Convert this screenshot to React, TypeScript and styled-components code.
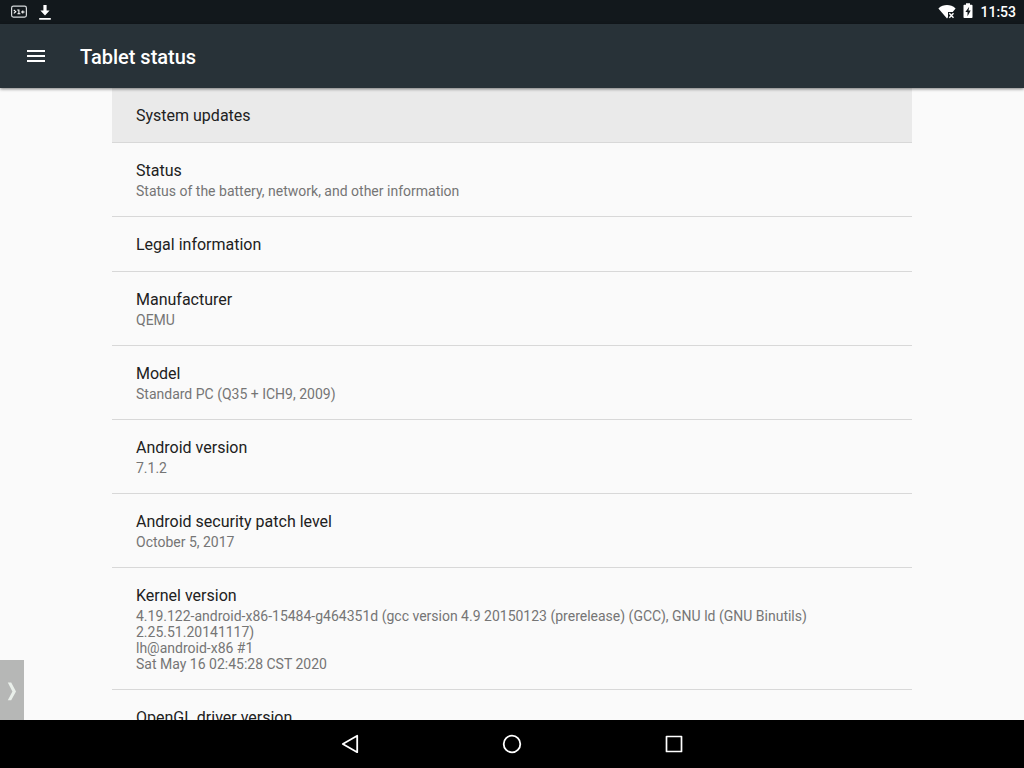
import React from 'react';
import styled, { createGlobalStyle } from 'styled-components';

const GlobalStyle = createGlobalStyle`
  * { box-sizing: border-box; }
  body {
    margin: 0;
    background: #fafafa;
    font-family: Roboto, "Liberation Sans", sans-serif;
  }
  button { border: 0; padding: 0; background: none; color: inherit; font: inherit; cursor: pointer; }
  svg { display: block; }
`;

const Screen = styled.div`
  display: flex;
  flex-direction: column;
  height: 100vh;
  overflow: hidden;
`;

const StatusBar = styled.div`
  flex: none;
  display: flex;
  justify-content: space-between;
  align-items: center;
  height: 24px;
  padding: 0 8px 0 10px;
  background: #12181c;
  color: #fff;
`;

const StatusGroup = styled.div<{ $gap: number }>`
  display: flex;
  align-items: center;
  gap: ${(p) => p.$gap}px;
`;

const Clock = styled.time`
  font-size: 14px;
  font-weight: 500;
  line-height: 24px;
`;

const AppBar = styled.header`
  flex: none;
  display: flex;
  align-items: center;
  gap: 32px;
  height: 64px;
  padding: 0 24px;
  background: #283238;
  color: #fff;
  box-shadow: 0 1px 3px rgba(0, 0, 0, 0.5);
  z-index: 1;
`;

const MenuButton = styled.button`
  width: 24px;
  height: 24px;
`;

const Title = styled.h1`
  margin: 0;
  padding-top: 2px;
  font-size: 20px;
  font-weight: 500;
  line-height: 24px;
`;

const Content = styled.main`
  position: relative;
  flex: 1;
  min-height: 0;
  overflow: hidden;
`;

const List = styled.ul`
  list-style: none;
  max-width: 800px;
  margin: 0 auto;
  padding: 0;
`;

const Row = styled.li<{ $active?: boolean }>`
  border-bottom: 1px solid #d8d8d8;
  background: ${(p) => (p.$active ? '#eaeaea' : 'transparent')};
`;

const RowButton = styled.button`
  display: flex;
  flex-direction: column;
  width: 100%;
  padding: 16px 24px 14px;
  text-align: left;
`;

const RowTitle = styled.span`
  font-size: 16px;
  line-height: 24px;
  color: #212121;
`;

const RowSummary = styled.span`
  max-width: 700px;
  padding-bottom: 3px;
  font-size: 14px;
  line-height: 16px;
  color: #757575;
  white-space: pre-line;
`;

const EdgeHandle = styled.button`
  position: absolute;
  left: 0;
  bottom: 0;
  display: flex;
  align-items: center;
  justify-content: flex-end;
  width: 24px;
  height: 60px;
  padding: 2px 7px 0 0;
  background: #b6b7b6;
`;

const NavBar = styled.nav`
  flex: none;
  display: flex;
  justify-content: center;
  height: 48px;
  background: #000;
`;

const NavButton = styled.button`
  display: flex;
  align-items: center;
  justify-content: center;
  width: 162px;
`;

const items: { title: string; summary?: string; active?: boolean }[] = [
  { title: 'System updates', active: true },
  { title: 'Status', summary: 'Status of the battery, network, and other information' },
  { title: 'Legal information' },
  { title: 'Manufacturer', summary: 'QEMU' },
  { title: 'Model', summary: 'Standard PC (Q35 + ICH9, 2009)' },
  { title: 'Android version', summary: '7.1.2' },
  { title: 'Android security patch level', summary: 'October 5, 2017' },
  {
    title: 'Kernel version',
    summary:
      '4.19.122-android-x86-15484-g464351d (gcc version 4.9 20150123 (prerelease) (GCC), GNU ld (GNU Binutils) 2.25.51.20141117)\nlh@android-x86 #1\nSat May 16 02:45:28 CST 2020',
  },
  { title: 'OpenGL driver version' },
];

const TerminalIcon = () => (
  <svg width="18" height="24" viewBox="0 0 18 24" fill="none" stroke="#fff" aria-hidden="true">
    <rect x="1.6" y="6.1" width="14.8" height="11" rx="1.8" stroke="#d5d9db" strokeWidth="1.2" />
    <path d="M3.8 10l2 1.7-2 1.7M7.2 10h1.7v3.6M7.4 13.7h3M11 12h3.6M12.8 10.4v3.2" strokeWidth="1.1" />
  </svg>
);

const DownloadIcon = () => (
  <svg width="14" height="24" viewBox="0 0 14 24" fill="#fff" aria-hidden="true">
    <path d="M5.4 5h3.2v5.6h3L7 15.6l-4.6-5h3zM1.2 18h11.6v1.7H1.2z" />
  </svg>
);

const WifiIcon = () => (
  <svg width="18" height="24" viewBox="0 0 18 24" aria-hidden="true">
    <path d="M.4 8.4C3 6.200 6 5.1 9 5.1s6 1.1 8.6 3.3l-2.9 3.500H10v5.4l-1 1.1z" fill="#fff" />
    <path d="M11.3 13.3l4.2 4.4M15.5 13.3l-4.2 4.4" stroke="#fff" strokeWidth="1.4" />
  </svg>
);

const BatteryIcon = () => (
  <svg width="10" height="24" viewBox="0 0 10 24" aria-hidden="true">
    <path d="M3 3.3h4v1.4h1.7q.8 0 .8.8v11.7q0 .8-.8.8H1.3q-.8 0-.8-.8V5.5q0-.8.8-.8H3z" fill="#fff" />
    <path d="M6.2 6.7L2.4 12h2.1v4.2L7.7 10.6H5.5z" fill="#12181c" />
  </svg>
);

export default function App() {
  return (
    <Screen>
      <GlobalStyle />
      <StatusBar>
        <StatusGroup $gap={10}>
          <TerminalIcon />
          <DownloadIcon />
        </StatusGroup>
        <StatusGroup $gap={7}>
          <WifiIcon />
          <BatteryIcon />
          <Clock>11:53</Clock>
        </StatusGroup>
      </StatusBar>
      <AppBar>
        <MenuButton aria-label="Open menu">
          <svg width="24" height="24" viewBox="0 0 24 24" fill="#fff">
            <path d="M3 6h18v2H3zM3 11h18v2H3zM3 16h18v2H3z" />
          </svg>
        </MenuButton>
        <Title>Tablet status</Title>
      </AppBar>
      <Content>
        <List>
          {items.map((item) => (
            <Row key={item.title} $active={item.active}>
              <RowButton>
                <RowTitle>{item.title}</RowTitle>
                {item.summary && <RowSummary>{item.summary}</RowSummary>}
              </RowButton>
            </Row>
          ))}
        </List>
        <EdgeHandle aria-label="Open side panel">
          <svg width="10" height="20" viewBox="0 0 10 20" fill="#e9efea">
            <path d="M.8 1.5h3.4L9 10.5 4.2 19.300H.8L5.4 10.5z" />
          </svg>
        </EdgeHandle>
      </Content>
      <NavBar>
        <NavButton aria-label="Back">
          <svg width="24" height="24" viewBox="0 0 24 24" fill="none" stroke="#fff" strokeWidth="1.8" strokeLinejoin="round">
            <path d="M19.2 3.8v16.400L4.8 12z" />
          </svg>
        </NavButton>
        <NavButton aria-label="Home">
          <svg width="24" height="24" viewBox="0 0 24 24" fill="none" stroke="#fff" strokeWidth="1.8">
            <circle cx="12" cy="12" r="8.3" />
          </svg>
        </NavButton>
        <NavButton aria-label="Recent apps">
          <svg width="24" height="24" viewBox="0 0 24 24" fill="none" stroke="#fff" strokeWidth="1.7" strokeLinejoin="round">
            <rect x="4.5" y="4.5" width="15" height="15" />
          </svg>
        </NavButton>
      </NavBar>
    </Screen>
  );
}
